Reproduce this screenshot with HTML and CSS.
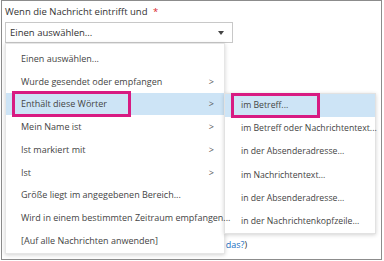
FILE: index.html
```html
<!DOCTYPE html>
<html lang="de">
<head>
    <meta charset="UTF-8">
    <title>Regel</title>
    <link rel="stylesheet" href="styles.css">
</head>
<body>
    <div class="panel">
        <label class="field-label">Wenn die Nachricht eintrifft und <span class="req">*</span></label>
        <div class="select">
            <span>Einen auswählen...</span>
            <span class="caret"></span>
        </div>
        <p class="hint">(Was ist <a href="#">das?</a>)</p>

        <!-- Dropdown menu, open -->
        <ul class="menu">
            <li>Einen auswählen...</li>
            <li>Wurde gesendet oder empfangen <span class="chev">&gt;</span></li>
            <li class="active">
                <span>Enthält diese Wörter</span>
                <span class="chev">&gt;</span>
                <ul class="submenu">
                    <li class="active">im Betreff...</li>
                    <li>im Betreff oder Nachrichtentext...</li>
                    <li>in der Absenderadresse...</li>
                    <li>im Nachrichtentext...</li>
                    <li>in der Absenderadresse...</li>
                    <li>in der Nachrichtenkopfzeile...</li>
                </ul>
            </li>
            <li>Mein Name ist <span class="chev">&gt;</span></li>
            <li>Ist markiert mit <span class="chev">&gt;</span></li>
            <li>Ist <span class="chev">&gt;</span></li>
            <li>Größe liegt im angegebenen Bereich...</li>
            <li>Wird in einem bestimmten Zeitraum empfangen...</li>
            <li>[Auf alle Nachrichten anwenden]</li>
        </ul>
    </div>
</body>
</html>
```

FILE: styles.css
```css
body {
    margin: 0;
    font-family: "Open Sans", "Noto Sans", sans-serif;
    font-size: 9.5px;
    color: #333;
    background: #fff;
}
.panel {
    position: relative;
    width: 373px;
    height: 248px;
    margin-left: 1px;
    padding: 5px 3px;
    border: 1px solid #8c8c8c;
}
.field-label {
    display: block;
    line-height: 12px;
    color: #333;
}
.req {
    color: #d9252d;
    margin-left: 3px;
}
.select {
    display: flex;
    align-items: center;
    justify-content: space-between;
    width: 214px;
    height: 19px;
    margin-top: 4px;
    padding: 0 8px 0 4px;
    border: 1px solid #c8c8c8;
}
.caret {
    width: 0;
    height: 0;
    border-left: 3.5px solid transparent;
    border-right: 3.5px solid transparent;
    border-top: 4px solid #444;
}
.hint {
    margin: 195px 0 0 186px;
    font-size: 9px;
    color: #333;
}
.hint a {
    color: #1a6fc1;
    text-decoration: none;
}
.menu {
    position: absolute;
    left: 3px;
    top: 42px;
    width: 218px;
    margin: 0;
    padding: 3px 0 1px;
    list-style: none;
    background: #fff;
    border: 1px solid #e6e6e6;
    box-shadow: 0 1px 4px rgba(0, 0, 0, 0.18);
    font-size: 9px;
}
.menu > li {
    position: relative;
    display: flex;
    align-items: center;
    justify-content: space-between;
    height: 22.75px;
    padding: 0 10px 0 15px;
    color: #444;
    white-space: nowrap;
}
.menu li.active {
    background: #cde4f6;
}
.menu > li.active::after {
    content: "";
    position: absolute;
    left: 6px;
    top: -1.5px;
    width: 113px;
    height: 20px;
    border: 3px solid #d81b82;
}
.chev {
    font-size: 9px;
    color: #555;
}
.submenu {
    position: absolute;
    left: 218px;
    top: 0;
    width: 150px;
    margin: 0;
    padding: 0;
    list-style: none;
    background: #fff;
    border: 1px solid #e2e2e2;
    box-shadow: 0 1px 4px rgba(0, 0, 0, 0.18);
    font-size: 8.7px;
}
.submenu li {
    position: relative;
    display: flex;
    align-items: center;
    height: 23.2px;
    padding: 0 0 0 16px;
    color: #444;
}
.submenu li.active::after {
    content: "";
    position: absolute;
    left: 6px;
    top: -1px;
    width: 83px;
    height: 19px;
    border: 3px solid #d81b82;
}
```
